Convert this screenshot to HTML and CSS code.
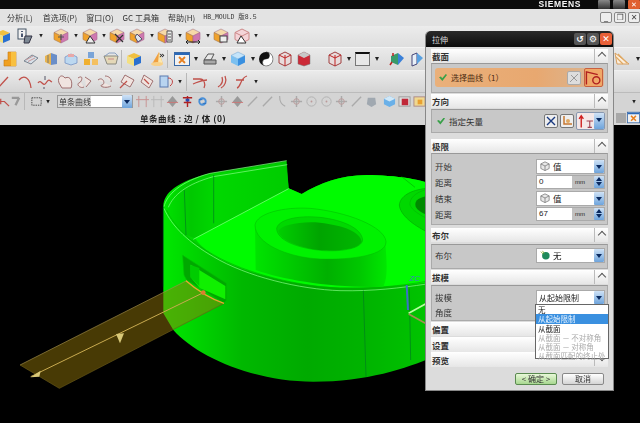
FILE: index.html
```html
<!DOCTYPE html>
<html lang="zh">
<head>
<meta charset="utf-8">
<title>拉伸</title>
<link rel="stylesheet" href="styles.css">
</head>
<body>
<svg class="defs" width="0" height="0">
  <defs>
    <g id="cube">
      <path d="M8 1 15 4.500 8 8 1 4.500Z" fill="#f6d9a8" stroke="#a87a90" stroke-width=".6"/>
      <path d="M1 4.500 8 8V15L1 11.500Z" fill="#f0a22c" stroke="#a87a50" stroke-width=".6"/>
      <path d="M15 4.500 8 8V15L15 11.500Z" fill="#cf78b0" stroke="#a86a90" stroke-width=".6"/>
    </g>
    <symbol id="c1" viewBox="0 0 16 16"><use href="#cube"/><path d="M5 9h6M8 6v6" stroke="#555" stroke-width="1.200"/></symbol>
    <symbol id="c2" viewBox="0 0 16 16"><use href="#cube"/><path d="M8 8 13 15H4Z" fill="#eee" stroke="#333"/></symbol>
    <symbol id="c3" viewBox="0 0 16 16"><use href="#cube"/><path d="M6 6 14 14M14 7 7 14" stroke="#333" stroke-width="1.200"/></symbol>
    <symbol id="c4" viewBox="0 0 16 16"><use href="#cube"/><path d="M8 6 13 11 9 14 6 9Z" fill="#dfe4ee" stroke="#556"/></symbol>
    <symbol id="c5" viewBox="0 0 16 16"><use href="#cube"/><path d="M10 3h5v11h-5Z" fill="#eee" stroke="#555"/><path d="M11 6h3M11 9h3M11 12h3" stroke="#555"/></symbol>
    <symbol id="c6" viewBox="0 0 16 16"><use href="#cube"/><path d="M1 14h14M3 12l-2 2 2 2M13 12l2 2-2 2" fill="none" stroke="#222"/></symbol>
    <symbol id="c7" viewBox="0 0 16 16"><use href="#cube"/><rect x="7" y="8" width="7" height="6" fill="#eee" stroke="#444"/></symbol>
    <symbol id="c8" viewBox="0 0 16 16"><path d="M8 1 15 4.500V11.500L8 15 1 11.500V4.500Z" fill="#f4d4d8" stroke="#c88"/><path d="M8 8V15M1 4.500 8 8 15 4.500" stroke="#c88" fill="none"/><path d="M7 8 12 15H3Z" fill="#fff" stroke="#333"/></symbol>
    <symbol id="info" viewBox="0 0 16 16"><rect x="1" y="1" width="8" height="10" fill="#f2f2f2" stroke="#456"/><path d="M5 3v1M5 5.500V9" stroke="#124" stroke-width="1.500"/><path d="M8 8h7l-3 7H7Z" fill="#7d8894" stroke="#334"/></symbol>
    <symbol id="or" viewBox="0 0 16 16"><path d="M6 1h8v14H2v-6h4Z" fill="#f0a020" stroke="#c87810" stroke-width=".6"/><path d="M9 1h5v14H9Z" fill="#f8c040"/></symbol>
    <symbol id="gr" viewBox="0 0 16 16"><path d="M1 10 9 4 15 7 8 13Z" fill="#d8e0e8" stroke="#7a8490"/><path d="M3 9 10 5M5 10.500 12 7" stroke="#c89898"/></symbol>
    <symbol id="mu" viewBox="0 0 16 16"><path d="M2 5 8 2V14L2 11Z" fill="#e8b450"/><path d="M8 2 14 4V13L8 14Z" fill="#6a8ec8"/><path d="M5 4v8" stroke="#7a7a70"/></symbol>
    <symbol id="bx" viewBox="0 0 16 16"><path d="M2 6 8 3 14 6V12L8 14 2 12Z" fill="#bcd8f0" stroke="#6a8ac0" stroke-width=".7"/><path d="M5 3h6v3H5Z" fill="#e8a8a8"/></symbol>
    <symbol id="yb" viewBox="0 0 16 16"><rect x="1" y="8" width="6" height="6" fill="#f0b030"/><rect x="5" y="1" width="6" height="6" fill="#7aa4d8"/><rect x="9" y="8" width="6" height="6" fill="#f4c060"/></symbol>
    <symbol id="gy" viewBox="0 0 16 16"><path d="M1 5h14l-2 8H4Z" fill="#e4d8b8" stroke="#8a8a80"/><path d="M2 5 6 2h6l3 3" fill="none" stroke="#8aa0c0"/><path d="M5 8h6" stroke="#c88"/></symbol>
    <symbol id="yc" viewBox="0 0 16 16"><path d="M8 2 15 5 8 8 1 5Z" fill="#f0c040"/><path d="M1 5 8 8V15L1 12Z" fill="#f4e080"/><path d="M15 5 8 8V15L15 12Z" fill="#2a70d0"/></symbol>
    <symbol id="cn" viewBox="0 0 16 16"><path d="M10 1 14 13H3Z" fill="#f0a040"/><path d="M10 1 14 13H9Z" fill="#fbe8b0"/><ellipse cx="8" cy="13" rx="6" ry="2" fill="#f8d088"/></symbol>
    <symbol id="wn" viewBox="0 0 16 16"><rect x=".500" y="1.500" width="15" height="13" fill="#f2f2f2" stroke="#3a6aa8"/><rect x="1" y="2" width="14" height="2" fill="#2a68b8"/><path d="M5 6 11 12M11 6 5 12" stroke="#e88020" stroke-width="1.800"/></symbol>
    <symbol id="pr" viewBox="0 0 16 16"><path d="M2 9 6 3h6l-3 6Z" fill="#e8e8e8" stroke="#555"/><path d="M2 9h12v4H2Z" fill="#a8a8a8" stroke="#555"/></symbol>
    <symbol id="bc" viewBox="0 0 16 16"><path d="M8 1 15 4.500 8 8 1 4.500Z" fill="#c4e4fa" stroke="#6aa0d0" stroke-width=".5"/><path d="M1 4.500 8 8V15L1 11.500Z" fill="#7cc0f0"/><path d="M15 4.500 8 8V15L15 11.500Z" fill="#3a90e0"/></symbol>
    <symbol id="yy" viewBox="0 0 16 16"><circle cx="8" cy="8" r="7" fill="#111"/><path d="M8 1A3.500 3.500 0 0 1 8 8 3.500 3.500 0 0 0 8 15 7 7 0 0 0 8 1Z" fill="#fff" stroke="#222" stroke-width=".4"/></symbol>
    <symbol id="rw" viewBox="0 0 16 16"><path d="M8 1 14 4V12L8 15 2 12V4Z" fill="#e8dcdc" stroke="#a04040"/><path d="M8 4V15M2 4 8 7 14 4" stroke="#c02020" fill="none"/></symbol>
    <symbol id="rc" viewBox="0 0 16 16"><path d="M2 4 8 1 14 4V13L8 15 2 13Z" fill="#cc2a38" stroke="#777" stroke-width=".5"/><path d="M2 4 8 7 14 4 8 1Z" fill="#c8c8c8"/></symbol>
    <symbol id="cl" viewBox="0 0 16 16"><path d="M2 5 9 2V14L2 11Z" fill="#3a9a6a"/><path d="M9 2 15 7 9 14Z" fill="#3a80d8"/><path d="M4 2v3M3 11l-2 3" stroke="#c02020" stroke-width="1.500"/></symbol>
    <symbol id="bw" viewBox="0 0 16 16"><path d="M3 4 8 2V13L3 15Z" fill="#e8f0f8" stroke="#447"/><path d="M8 2 14 7 8 13Z" fill="#58a0e0"/></symbol>
    <symbol id="ht" viewBox="0 0 16 16"><path d="M1 2 15 13H3Z" fill="#fbeedd" stroke="#d8a060"/><path d="M4 3 13 12M2 6 9 13" stroke="#e0a860" stroke-width="1.200"/></symbol>
    <symbol id="r1" viewBox="0 0 16 16"><path d="M2 14 12 3" class="rl"/></symbol>
    <symbol id="r2" viewBox="0 0 16 16"><path d="M2 6C7 0 13 4 14 14" class="rl"/></symbol>
    <symbol id="r3" viewBox="0 0 16 16"><path d="M1 9C4 4 6 14 9 9S13 7 15 8" class="rl"/><path d="M8 2v4M7 13v2" class="dl"/></symbol>
    <symbol id="r4" viewBox="0 0 16 16"><path d="M8 4C4-1 0 4 2 9L5 14H14C16 9 14 1 8 4Z" class="rg"/></symbol>
    <symbol id="r5" viewBox="0 0 16 16"><path d="M2 4C8 0 6 8 3 9S4 15 8 13M9 3 15 7 10 13" class="rg"/></symbol>
    <symbol id="r6" viewBox="0 0 16 16"><path d="M1 6C6 2 9 10 5 11S9 15 14 12M8 2C12 2 15 5 14 8" class="rg"/></symbol>
    <symbol id="r7" viewBox="0 0 16 16"><path d="M6 1 15 6 11 13 2 8Z" class="rg"/><path d="M1 14 8 7" class="rl"/></symbol>
    <symbol id="r8" viewBox="0 0 16 16"><path d="M5 1 14 7 10 14 2 8Z" class="rg"/><path d="M5 5 10 10" class="rl"/></symbol>
    <symbol id="r9" viewBox="0 0 16 16"><rect x="1" y="2" width="8" height="11" fill="#b8d4f0" stroke="#5a7ab0"/><path d="M9 4C14 4 15 9 11 12" stroke="#c04040" fill="none"/></symbol>
    <symbol id="r10" viewBox="0 0 16 16"><path d="M1 5H8C12 5 14 10 12 14M1 10C6 8 9 6 15 6" class="rl"/></symbol>
    <symbol id="r11" viewBox="0 0 16 16"><path d="M6 14C10 12 12 7 10 2M3 13C8 10 8 6 7 3" class="rl"/></symbol>
    <symbol id="r12" viewBox="0 0 16 16"><path d="M4 14C8 13 7 4 14 2M3 6H11" class="rl"/></symbol>
    <symbol id="s1" viewBox="0 0 14 14"><path d="M1 7H8L13 12M4 4v6" class="rl"/></symbol>
    <symbol id="s2" viewBox="0 0 14 14"><path d="M3 3 11 3M11 3 7 11" stroke="#999" stroke-width="2.500" fill="none"/></symbol>
    <symbol id="s3" viewBox="0 0 14 14"><rect x="2" y="3" width="10" height="8" fill="none" stroke="#444" stroke-dasharray="1.500 1"/></symbol>
    <symbol id="s4" viewBox="0 0 14 14"><path d="M3 1V13M11 1V13M0 5H14" stroke="#c89090" fill="none"/></symbol>
    <symbol id="s5" viewBox="0 0 14 14"><path d="M3 1V13M11 1V13M0 5H14" stroke="#b8b8b8" fill="none"/></symbol>
    <symbol id="s6" viewBox="0 0 14 14"><path d="M7 1 12 7 7 13 2 7Z" fill="#999"/><path d="M1 8H13" stroke="#c77"/></symbol>
    <symbol id="s7" viewBox="0 0 14 14"><path d="M7 1V13M2 3H12M3 8H11" stroke="#b02020" stroke-width="1.500"/><rect x="5" y="4" width="4" height="3" fill="#2a4ab0"/></symbol>
    <symbol id="s8" viewBox="0 0 14 14"><circle cx="7" cy="7" r="3.500" fill="none" stroke="#4a90d8" stroke-width="2"/><path d="M3 5H7M7 9h4" stroke="#2a70c0"/></symbol>
    <symbol id="s9" viewBox="0 0 14 14"><path d="M7 1V13M1 7H13" stroke="#aaa" stroke-width="1.500"/><circle cx="7" cy="7" r="3" fill="none" stroke="#b99"/></symbol>
    <symbol id="s10" viewBox="0 0 14 14"><path d="M2 12 12 2" stroke="#aaa" stroke-width="1.500"/></symbol>
    <symbol id="s11" viewBox="0 0 14 14"><path d="M5 1C5 8 7 10 11 12" stroke="#aaa" fill="none" stroke-width="1.200"/></symbol>
    <symbol id="s12" viewBox="0 0 14 14"><circle cx="7" cy="7" r="5" fill="none" stroke="#b0b0b0"/><circle cx="7" cy="7" r="1" fill="#b99"/></symbol>
    <symbol id="s13" viewBox="0 0 14 14"><path d="M3 3 11 3 12 10 7 13 2 10Z" fill="#a0a8b0"/></symbol>
    <symbol id="s14" viewBox="0 0 14 14"><path d="M7 1 13 4V10L7 13 1 10V4Z" fill="#6ab0e8"/><path d="M1 4 7 7 13 4 7 1Z" fill="#d0e8f8"/></symbol>
    <symbol id="s15" viewBox="0 0 14 14"><rect x="1" y="2" width="12" height="10" fill="#ddd" stroke="#999"/><rect x="4" y="4" width="7" height="7" fill="#c02838"/></symbol>
    <symbol id="s16" viewBox="0 0 14 14"><rect x="1" y="2" width="12" height="10" fill="#f0d890" stroke="#a88"/><rect x="5" y="5" width="5" height="5" fill="#e8a030"/></symbol>
    <symbol id="vcube" viewBox="0 0 12 12"><path d="M6 1 11 3.500V9L6 11.500 1 9V3.500Z" fill="#e8e8e8" stroke="#666" stroke-width=".8"/><path d="M1 3.500 6 6 11 3.500M6 6V11.500" fill="none" stroke="#666" stroke-width=".8"/></symbol>
  </defs>
</svg>

<div class="app">
  <div class="topbar">
    <span class="brand">SIEMENS</span>
    <span class="wb"></span><span class="wb"></span><span class="wb wb-x">✕</span>
  </div>
  <div class="menu">
    <span class="mi m-a">分析(L)</span><span class="mi m-b">首选项(P)</span><span class="mi m-c">窗口(O)</span><span class="mi m-d">GC 工具箱</span><span class="mi m-e">帮助(H)</span><span class="mi m-f">HB_MOULD 版8.5</span>
    <span class="mbtns"><span class="mb">_</span><span class="mb">❐</span><span class="mb">✕</span></span>
  </div>

  <div class="tb tb1">
    <svg class="i l-5"><use href="#yc"/></svg>
    <svg class="i l6"><use href="#info"/></svg><i class="d l6"></i>
    <svg class="i l10"><use href="#c1"/></svg><i class="d l5"></i>
    <svg class="i l4"><use href="#c2"/></svg><i class="d l4"></i>
    <svg class="i l3"><use href="#c3"/></svg>
    <svg class="i l4"><use href="#c4"/></svg><i class="d l5"></i>
    <svg class="i l3"><use href="#c5"/></svg><i class="d l5"></i>
    <svg class="i l3"><use href="#c6"/></svg><i class="d l5"></i>
    <svg class="i l3"><use href="#c7"/></svg>
    <svg class="i l5"><use href="#c8"/></svg><i class="d l4"></i>
  </div>

  <div class="tb tb2">
    <svg class="i l2"><use href="#or"/></svg>
    <svg class="i l5"><use href="#gr"/></svg>
    <svg class="i l4"><use href="#mu"/></svg>
    <svg class="i l4"><use href="#bx"/></svg>
    <svg class="i l4"><use href="#yb"/></svg>
    <svg class="i l4"><use href="#gy"/></svg>
    <b class="sep l2"></b>
    <svg class="i l3"><use href="#yc"/></svg>
    <svg class="i l7"><use href="#cn"/></svg>
    <span class="more">»</span>
    <b class="sep l2"></b>
    <svg class="i l5"><use href="#wn"/></svg><i class="d l4"></i>
    <svg class="i l4"><use href="#pr"/></svg><i class="d l4"></i>
    <svg class="i l4"><use href="#bc"/></svg><i class="d l5"></i>
    <svg class="i l3"><use href="#yy"/></svg>
    <svg class="i l3"><use href="#rw"/></svg>
    <svg class="i l3"><use href="#rc"/></svg>
    <svg class="i l15"><use href="#rw"/></svg><i class="d l4"></i>
    <span class="rect l4"></span><i class="d l5"></i>
    <svg class="i l10"><use href="#cl"/></svg>
    <svg class="i l4"><use href="#bw"/></svg>
    <svg class="i push"><use href="#ht"/></svg><i class="d l4"></i>
  </div>

  <div class="tb tb3">
    <svg class="i l-4"><use href="#r1"/></svg>
    <svg class="i l5"><use href="#r2"/></svg>
    <svg class="i l4"><use href="#r3"/></svg>
    <svg class="i l4"><use href="#r4"/></svg>
    <svg class="i l3"><use href="#r5"/></svg>
    <svg class="i l5"><use href="#r6"/></svg>
    <svg class="i l6"><use href="#r7"/></svg>
    <svg class="i l4"><use href="#r8"/></svg>
    <svg class="i l4"><use href="#r9"/></svg><i class="d l3"></i>
    <b class="sep l4"></b>
    <svg class="i l4"><use href="#r10"/></svg>
    <svg class="i l7"><use href="#r11"/></svg>
    <svg class="i l2"><use href="#r12"/></svg><i class="d l5"></i>
  </div>

  <div class="tb tb4">
    <svg class="s l-3"><use href="#s1"/></svg>
    <svg class="s l-1"><use href="#s2"/></svg>
    <b class="sep l2"></b>
    <svg class="s l4"><use href="#s3"/></svg><i class="d l3"></i>
    <span class="filter"><span class="filter-t">单条曲线</span><span class="arrow"></span></span>
    <svg class="s l3"><use href="#s4"/></svg>
    <svg class="s l2"><use href="#s5"/></svg>
    <svg class="s l2"><use href="#s6"/></svg>
    <svg class="s l2"><use href="#s7"/></svg>
    <svg class="s l2"><use href="#s8"/></svg>
    <svg class="s l6"><use href="#s9"/></svg>
    <svg class="s l3"><use href="#s6"/></svg>
    <svg class="s l2"><use href="#s10"/></svg>
    <svg class="s l2"><use href="#s10"/></svg>
    <svg class="s l1"><use href="#s11"/></svg>
    <svg class="s l2"><use href="#s9"/></svg>
    <svg class="s l2"><use href="#s12"/></svg>
    <svg class="s l2"><use href="#s12"/></svg>
    <svg class="s l2"><use href="#s9"/></svg>
    <svg class="s l2"><use href="#s10"/></svg>
    <svg class="s l2"><use href="#s13"/></svg>
    <svg class="s l5"><use href="#s14"/></svg>
    <svg class="s l2"><use href="#s15"/></svg>
    <svg class="s l2"><use href="#s16"/></svg>
    <i class="d push"></i>
  </div>

  <div class="status">
    <span class="status-t">单条曲线 : 边 / 体 (0)</span>
    <span class="st-gray"></span>
    <svg class="s"><use href="#wn"/></svg>
  </div>

  <svg class="stage" viewBox="0 -105 1920 894" preserveAspectRatio="none">
    <defs>
      <linearGradient id="wall" gradientUnits="userSpaceOnUse" x1="490" y1="0" x2="1276" y2="0">
        <stop offset="0" stop-color="#00e800"/><stop offset=".1" stop-color="#00d800"/><stop offset=".3" stop-color="#00b800"/><stop offset=".55" stop-color="#00aa00"/><stop offset=".78" stop-color="#00b400"/><stop offset="1" stop-color="#00c400"/>
      </linearGradient>
      <linearGradient id="back" gradientUnits="userSpaceOnUse" x1="500" y1="0" x2="866" y2="0">
        <stop offset="0" stop-color="#00e000"/><stop offset=".2" stop-color="#00c800"/><stop offset=".4" stop-color="#00d800"/><stop offset="1" stop-color="#00cc00"/>
      </linearGradient>
      <linearGradient id="boss" gradientUnits="userSpaceOnUse" x1="765" y1="0" x2="1160" y2="0">
        <stop offset="0" stop-color="#00e400"/><stop offset=".3" stop-color="#00c800"/><stop offset=".55" stop-color="#00b000"/><stop offset=".8" stop-color="#00c800"/><stop offset="1" stop-color="#00e800"/>
      </linearGradient>
      <linearGradient id="hole" gradientUnits="userSpaceOnUse" x1="830" y1="0" x2="1090" y2="0">
        <stop offset="0" stop-color="#00d000"/><stop offset=".5" stop-color="#00a400"/><stop offset="1" stop-color="#00b800"/>
      </linearGradient>
    </defs>
    <path class="m-wall" d="M490 140C490 100 530 65 630 40L860 2 866 85 905 102C960 70 1020 45 1100 45 1180 45 1290 60 1300 80V590C1220 625 1100 665 940 665 760 665 590 590 520 510L490 460Z"/>
    <path class="m-back" d="M500 135C520 85 560 60 640 42L858 5 866 85 585 234 555 225C530 200 505 165 500 135Z"/>
    <path class="m-top" d="M585 234 866 85 905 102C960 70 1020 45 1100 45 1180 45 1290 60 1300 80V365C1200 378 1100 385 1020 383 900 380 740 345 640 285 610 265 595 250 585 234Z"/>
    <path class="m-rim" d="M492 140C500 105 540 65 630 40L860 2"/>
    <path class="m-rim" d="M505 142C520 105 560 72 640 50L862 14"/>
    <path class="m-rim" d="M492 145C515 200 570 250 640 290 740 350 900 388 1020 392 1120 394 1200 384 1280 372"/>
    <path class="m-line m-faint" d="M500 150C525 205 575 248 640 284 740 342 900 380 1020 384 1120 386 1200 378 1280 364"/>
    <path class="m-rim" d="M580 238 866 86"/>
    <path class="m-line" d="M553 90 558 225M641 45 641 190M1090 392 1098 650M1228 385 1232 600M490 140V380"/>

    <path class="m-boss" d="M765 195 767 330C850 360 1000 385 1150 380 1165 350 1160 300 1155 240Z"/>
    <path class="m-bosstop" d="M765 195C770 160 850 140 930 145 1040 155 1155 200 1158 245 1160 285 1060 300 960 297 860 292 765 250 765 195Z"/>
    <path class="m-holeb" d="M830 205C835 180 890 165 960 172 1030 180 1085 205 1088 240 1085 265 1030 275 970 272 890 265 830 240 830 205Z"/>
    <path class="m-hole" d="M835 212C845 195 900 183 960 188 1030 196 1080 215 1085 245 1075 265 1030 273 970 271 895 265 840 240 835 212Z"/>
    <path class="m-holeb2" d="M1280 85C1230 90 1200 110 1198 135 1200 165 1240 195 1280 215Z"/>
    <path class="m-holeb" d="M1280 88C1245 98 1228 115 1230 135 1235 150 1260 165 1280 175Z"/>
    <path class="m-hole2" d="M1280 108C1250 115 1243 125 1247 140 1252 150 1265 158 1280 164Z"/>
    <path class="m-line m-faint" d="M1205 50 1245 82"/>

    <path class="m-slotd" d="M548 286 570 300 680 370V420L672 430 560 360 552 345Z"/>
    <path class="m-slotw" d="M572 314 676 378V418L625 395 600 385 572 352Z"/>
    <path class="m-slotb" d="M570 314 598 324 598 378 572 352Z"/>

    <path class="m-ribbon" d="M60 615 560 362C590 385 630 415 672 430L178 685Z"/>
    <path class="m-edge m-dim" d="M60 615 560 362"/>
    <path class="m-edge m-thin" d="M178 685 672 430M60 615 178 685"/>
    <path class="m-edge m-or" d="M558 362C590 390 630 415 672 430"/>
    <path class="m-edge" d="M92 650 610 398"/>
    <circle class="m-pt" cx="610" cy="398" r="7"/>
    <path class="m-ar" d="M348 522 372 520 360 550Z"/>
    <path class="m-ar" d="M92 652 122 632 118 650Z"/>

    <path class="m-z" d="M1220 375 1224 450"/>
    <text class="m-zt" x="1228" y="362">ZC</text>
    <path class="m-x1" d="M1226 460 1276 432"/>
    <path class="m-x2" d="M1226 462 1276 490"/>
  </svg>

  <section class="dlg">
    <header class="dlg-title">
      <span class="dlg-name">拉伸</span>
      <span class="tbtn">↺</span><span class="tbtn">⚙</span><span class="tbtn tbtn-x">✕</span>
    </header>

    <div class="sh sh-a"><span>截面</span><em></em></div>
    <div class="panel p-sec">
      <div class="sel">
        <span class="chk"></span><span class="sel-t">选择曲线（1）</span>
        <span class="ib ib-g"><svg viewBox="0 0 12 12"><path d="M2 10 10 2M3 3l6 6" stroke="#999" fill="none"/></svg></span>
        <span class="ib ib-o"><svg viewBox="0 0 12 12"><path d="M1 11V2L9 4" stroke="#b02020" fill="none"/><circle cx="8" cy="8" r="2.500" stroke="#b02020" fill="none"/></svg></span>
      </div>
    </div>

    <div class="sh sh-b"><span>方向</span><em></em></div>
    <div class="panel p-dir">
      <span class="chk"></span><span class="lab lab-v">指定矢量</span>
      <span class="ib ib-w"><svg viewBox="0 0 12 12"><path d="M2 2 10 10M10 2 2 10" stroke="#1a3a80" stroke-width="1.400"/></svg></span>
      <span class="ib ib-w"><svg viewBox="0 0 12 12"><path d="M3 1V9H11" stroke="#c87830" stroke-width="1.500" fill="none"/><circle cx="7" cy="6" r="2" fill="#e0a860"/></svg></span>
      <span class="vec"><svg viewBox="0 0 16 14"><path d="M4 13V3M2 5 4 2 6 5" stroke="#d02020" fill="none" stroke-width="1.300"/><path d="M9 7H15M12 7V13M10 13H14" stroke="#a04050" fill="none"/></svg><span class="arrow"></span></span>
    </div>

    <div class="sh sh-c"><span>极限</span><em></em></div>
    <div class="panel p-lim">
      <div class="r"><span class="lab">开始</span><span class="cb"><svg class="vc"><use href="#vcube"/></svg><span>值</span><span class="arrow"></span></span></div>
      <div class="r"><span class="lab">距离</span><span class="num"><span class="num-v">0</span><span class="unit">mm</span><span class="arrow arrow-d"></span></span></div>
      <div class="r"><span class="lab">结束</span><span class="cb"><svg class="vc"><use href="#vcube"/></svg><span>值</span><span class="arrow"></span></span></div>
      <div class="r"><span class="lab">距离</span><span class="num"><span class="num-v">67</span><span class="unit">mm</span><span class="arrow arrow-d"></span></span></div>
    </div>

    <div class="sh sh-d"><span>布尔</span><em></em></div>
    <div class="panel p-bool">
      <div class="r"><span class="lab">布尔</span><span class="cb"><svg class="vc" viewBox="0 0 12 12"><circle cx="7" cy="7" r="4.500" fill="#1e8a5a"/><path d="M1 2 4 5M3 1 5 4" stroke="#8ab030"/></svg><span>无</span><span class="arrow"></span></span></div>
    </div>

    <div class="sh sh-e"><span>拔模</span><em></em></div>
    <div class="panel p-draft">
      <div class="r"><span class="lab">拔模</span><span class="cb cb-plain"><span>从起始限制</span><span class="arrow"></span></span></div>
      <div class="r r-a"><span class="lab">角度</span></div>
    </div>

    <div class="sh sh-f"><span>偏置</span></div>
    <div class="sh sh-g"><span>设置</span></div>
    <div class="sh sh-h"><span>预览</span><em class="em-d"></em></div>

    <footer class="dlg-foot">
      <span class="btn btn-ok">&lt; 确定 &gt;</span>
      <span class="btn">取消</span>
    </footer>

    <ul class="drop">
      <li>无</li>
      <li class="on">从起始限制</li>
      <li>从截面</li>
      <li class="off">从截面 － 不对称角</li>
      <li class="off">从截面 － 对称角</li>
      <li class="off">从截面匹配的终止处</li>
    </ul>
  </section>
</div>
</body>
</html>
```

FILE: styles.css
```css
* { box-sizing: border-box; margin: 0; padding: 0; }
html, body { width: 640px; height: 423px; overflow: hidden; background: #000; }
body { font-family: "Noto Sans CJK SC", "Liberation Sans", sans-serif; font-size: 9px; color: #222; }
.defs { position: absolute; }
.app { position: relative; width: 640px; height: 423px; overflow: hidden; background: #000; display: flex; flex-direction: column; }

.rl { fill: none; stroke: #c0504a; stroke-width: 1.300; }
.dl { fill: none; stroke: #556; stroke-width: 1; }
.rg { fill: #f0e4e0; stroke: #a07070; stroke-width: 1; }

.topbar { height: 9px; flex: none; background: #0c0c0c; display: flex; align-items: center; justify-content: flex-end; gap: 3px; filter: blur(.3px); }
.brand { color: #f4f4f4; font: bold 8.500px/9px "Liberation Sans", sans-serif; letter-spacing: .6px; margin-right: 14px; }
.wb { width: 12px; height: 9px; background: linear-gradient(#888, #333); border-radius: 1px; }
.wb-x { background: #e06030; color: #fff; font-size: 7px; line-height: 9px; text-align: center; }

.menu { height: 17px; flex: none; background: #e3e3e3; display: flex; align-items: center; filter: blur(.4px); }
.mi { font-size: 8px; line-height: 12px; color: #333; white-space: nowrap; }
.m-a { margin-left: 7px; }
.m-b { margin-left: 10px; }
.m-c { margin-left: 9px; }
.m-d { margin-left: 9px; }
.m-e { margin-left: 9px; }
.m-f { margin-left: 8px; font-family: "Liberation Mono", "Noto Sans CJK SC", monospace; font-size: 6.500px; }
.mbtns { margin-left: auto; display: flex; gap: 2px; }
.mb { width: 12px; height: 11px; border: 1px solid #888; border-radius: 2px; background: #eee; font: 8px/9px "DejaVu Sans", sans-serif; color: #444; text-align: center; }

.tb { flex: none; display: flex; align-items: center; overflow: hidden; filter: blur(.35px); }
.tb1 { height: 21px; padding-bottom: 2px; background: linear-gradient(#ececec, #dedede); }
.tb2 { height: 23px; background: linear-gradient(#eaeaea, #d8d8d8); border-top: 1px solid #f4f4f4; }
.tb3 { height: 22px; background: linear-gradient(#ebebeb, #d4d4d4); border-top: 1px solid #f0f0f0; }
.tb4 { height: 18px; background: #d4d4d4; border-top: 1px solid #bbb; }
.i { width: 16px; height: 16px; flex: none; }
.s { width: 13px; height: 13px; flex: none; }
.d { display: block; width: 4px; height: 4px; flex: none; background: #222; clip-path: polygon(0 0, 100% 0, 50% 100%); }
.sep { display: block; width: 1px; height: 18px; flex: none; background: #b8b8b8; margin-right: 1px; }
.more { width: 6px; font: bold 9px/10px "DejaVu Sans", sans-serif; color: #333; margin-left: -6px; margin-top: -8px; }
.rect { width: 15px; height: 14px; flex: none; background: #e8e8e8; border: 1px solid #777; border-top: 2px solid #111; }
.push { margin-left: auto; }
i.push { margin-right: 4px; }
.l-5 { margin-left: -5px; } .l-4 { margin-left: -4px; } .l-3 { margin-left: -3px; } .l-1 { margin-left: -1px; }
.l1 { margin-left: 1px; } .l2 { margin-left: 2px; } .l3 { margin-left: 3px; } .l4 { margin-left: 4px; } .l5 { margin-left: 5px; }
.l6 { margin-left: 6px; } .l7 { margin-left: 7px; } .l8 { margin-left: 8px; } .l10 { margin-left: 10px; } .l15 { margin-left: 15px; }
.tb2 .push { margin-right: 2px; }

.filter { width: 76px; height: 13px; flex: none; margin-left: 7px; background: #fff; border: 1px solid #999; display: flex; align-items: center; font-size: 8px; line-height: 11px; }
.filter-t { width: 33px; background: #d8d8d8; color: #333; padding-left: 1px; white-space: nowrap; }
.filter .arrow { margin-left: auto; }

.status { height: 15px; flex: none; background: #d6d6d6; display: flex; align-items: center; filter: blur(.35px); }
.status-t { margin-left: 140px; font-size: 8.500px; letter-spacing: .5px; font-weight: 700; line-height: 12px; color: #222; white-space: nowrap; }
.st-gray { width: 10px; height: 10px; background: #a8a8a8; margin-left: auto; margin-right: 1px; }

.stage { display: block; flex: none; width: 640px; height: 298px; filter: blur(.35px); }
.m-wall { fill: url(#wall); }
.m-back { fill: url(#back); }
.m-top { fill: #00fb00; }
.m-rim { fill: none; stroke: #8cff8c; stroke-width: 2; }
.m-line { fill: none; stroke: #007a20; stroke-width: 2; }
.m-faint { stroke: #00b000; }
.m-boss { fill: url(#boss); }
.m-bosstop { fill: #00f200; stroke: #00b800; stroke-width: 1.500; }
.m-holeb { fill: #00d800; stroke: #00b000; stroke-width: 1.500; }
.m-hole { fill: url(#hole); }
.m-holeb2 { fill: #00d800; stroke: #009800; stroke-width: 1.500; }
.m-hole2 { fill: #008a00; }
.m-slotd { fill: #00a800; stroke: #00c000; stroke-width: 2; }
.m-slotw { fill: #10f000; }
.m-slotb { fill: #00cc00; }
.m-ribbon { fill: rgba(150, 122, 10, .48); }
.m-edge { fill: none; stroke: #c8aa50; stroke-width: 3; }
.m-dim { stroke: #a08c48; stroke-width: 2; }
.m-thin { stroke: #6b5a18; stroke-width: 2; }
.m-or { stroke: #e8a830; stroke-width: 4; }
.m-pt { fill: #d88030; }
.m-ar { fill: #d8c878; }
.m-z { fill: none; stroke: #3a70c8; stroke-width: 6; }
.m-zt { fill: #3a80c0; font: italic 24px "Liberation Sans", sans-serif; }
.m-x1 { stroke: #b8ffa0; stroke-width: 5; }
.m-x2 { stroke: #a09050; stroke-width: 5; }

.dlg { position: absolute; left: 425px; top: 31px; width: 189px; height: 360px; background: #dcdcdc; border: 1px solid #888; border-top: 0; border-radius: 5px 5px 0 0; display: flex; flex-direction: column; filter: blur(.35px); }
.dlg-title { height: 16px; flex: none; background: linear-gradient(#2a2a2a, #0c0c0c); border-radius: 5px 5px 0 0; display: flex; align-items: center; gap: 1px; padding: 0 1px 0 6px; color: #d8d8d8; font-size: 8px; }
.dlg-name { margin-right: auto; }
.tbtn { width: 12px; height: 12px; border-radius: 2px; background: #555; color: #fff; font: bold 9px/12px "DejaVu Sans", sans-serif; text-align: center; }
.tbtn-x { background: #e86038; }

.sh { flex: none; margin: 0 5px; height: 14px; background: linear-gradient(#fff, #e6e6e6); display: flex; align-items: center; font-size: 8.500px; line-height: 12px; font-weight: 700; color: #333; padding-left: 1px; position: relative; }
.sh em { position: absolute; right: 0; top: 0; width: 14px; height: 14px; border-left: 1px solid #bbb; }
.sh em::after { content: ""; position: absolute; left: 4px; top: 4px; width: 5px; height: 5px; border-left: 1.500px solid #555; border-top: 1.500px solid #555; transform: rotate(45deg); }
.sh em.em-d::after { transform: rotate(225deg); top: 2px; }
.sh-a { margin-top: 2px; }
.sh-b { margin-top: 1px; }
.sh-c { margin-top: 6px; }
.sh-d { margin-top: 3px; }
.sh-e { margin-top: 1px; }
.sh-f { margin-top: 1px; }
.sh-g { height: 15px; margin-top: 1px; }
.sh-h { height: 15px; }

.panel { flex: none; margin: 0 5px; background: #c8c8c8; border: 1px solid #aaa; border-top-color: #999; }
.p-sec { height: 30px; padding: 4px 3px 5px; }
.sel { height: 19px; border-radius: 3px; background: linear-gradient(90deg, #eab07a, #e8a870 60%, #d8b898); display: flex; align-items: center; padding: 0 1px 0 4px; }
.chk { width: 8px; height: 7px; flex: none; background: #38a048; clip-path: polygon(0 45%, 25% 35%, 40% 60%, 85% 0, 100% 15%, 42% 100%); }
.sel-t { margin-left: 4px; font-size: 8px; margin-right: auto; white-space: nowrap; color: #4a2a10; }
.ib { width: 14px; height: 14px; flex: none; border: 1px solid #777; border-radius: 2px; background: #eee; display: flex; }
.ib svg { width: 100%; height: 100%; }
.ib-g { background: #ddd; border-color: #aaa; margin-right: 3px; }
.ib-o { width: 19px; height: 19px; background: #f0a868; border-color: #c86040; }
.p-dir { height: 24px; display: flex; align-items: center; padding: 0 2px 0 5px; margin-top: 1px; gap: 2px; }
.lab { font-size: 8.500px; line-height: 12px; color: #333; }
.lab-v { margin: 0 auto 0 2px; }
.vec { display: flex; width: 29px; height: 18px; background: #f4e8e8; border: 1px solid #8898b0; border-radius: 2px; }
.vec svg { flex: 1; }
.vec .arrow { height: 100%; }
.p-lim { height: 72px; padding: 4px 2px 0 3px; display: flex; flex-direction: column; }
.p-bool { height: 25px; padding: 2px 2px 0 3px; margin-top: 2px; }
.p-draft { height: 36px; padding: 3px 2px 0 3px; margin-top: 1px; }
.r { height: 16px; flex: none; display: flex; align-items: center; justify-content: space-between; }
.r-a { height: 13px; }
.cb { width: 69px; height: 15px; background: #fff; border: 1px solid #aaa; display: flex; align-items: center; gap: 3px; padding-left: 3px; font-size: 8.500px; }
.cb .arrow { margin-left: auto; }
.cb-plain { padding-left: 2px; font-size: 8px; white-space: nowrap; }
.vc { width: 10px; height: 10px; flex: none; }
.arrow { position: relative; display: block; width: 10px; height: 13px; flex: none; background: linear-gradient(#cfe2f6, #6ea4dc); border-radius: 1px; }
.arrow::after { content: ""; position: absolute; left: 2px; top: 5px; border: 3px solid transparent; border-top: 4px solid #0a2a60; border-bottom: 0; }
.arrow-d::before { content: ""; position: absolute; left: 2px; top: 1px; border: 3px solid transparent; border-bottom: 4px solid #0a2a60; border-top: 0; }
.arrow-d::after { top: 6px; }
.num { width: 69px; height: 14px; background: #c0c0c0; border: 1px solid #aaa; display: flex; align-items: center; font: 8px/12px "Liberation Sans", sans-serif; }
.num-v { width: 35px; height: 100%; background: #fff; padding-left: 2px; }
.unit { font-size: 6px; margin-left: 3px; }
.num .arrow { margin-left: auto; height: 100%; }

.dlg-foot { flex: 1; display: flex; justify-content: flex-end; align-items: center; gap: 5px; padding-right: 9px; }
.btn { width: 42px; height: 12px; border: 1px solid #888; border-radius: 2px; background: linear-gradient(#fff, #d4d4d4); text-align: center; font-size: 8px; line-height: 10px; color: #333; }
.btn-ok { background: linear-gradient(#e8f8d8, #a8d890); border-color: #5a8a50; }

.drop { position: absolute; left: 109px; top: 273px; width: 74px; height: 55px; list-style: none; background: #fff; border: 1px solid #666; font-size: 7.500px; }
.drop li { height: 9px; line-height: 9px; padding-left: 2px; white-space: nowrap; overflow: hidden; color: #222; }
.drop .on { background: #3a90e0; color: #e8f4ff; height: 10px; }
.drop .off { color: #aaa; }
```
